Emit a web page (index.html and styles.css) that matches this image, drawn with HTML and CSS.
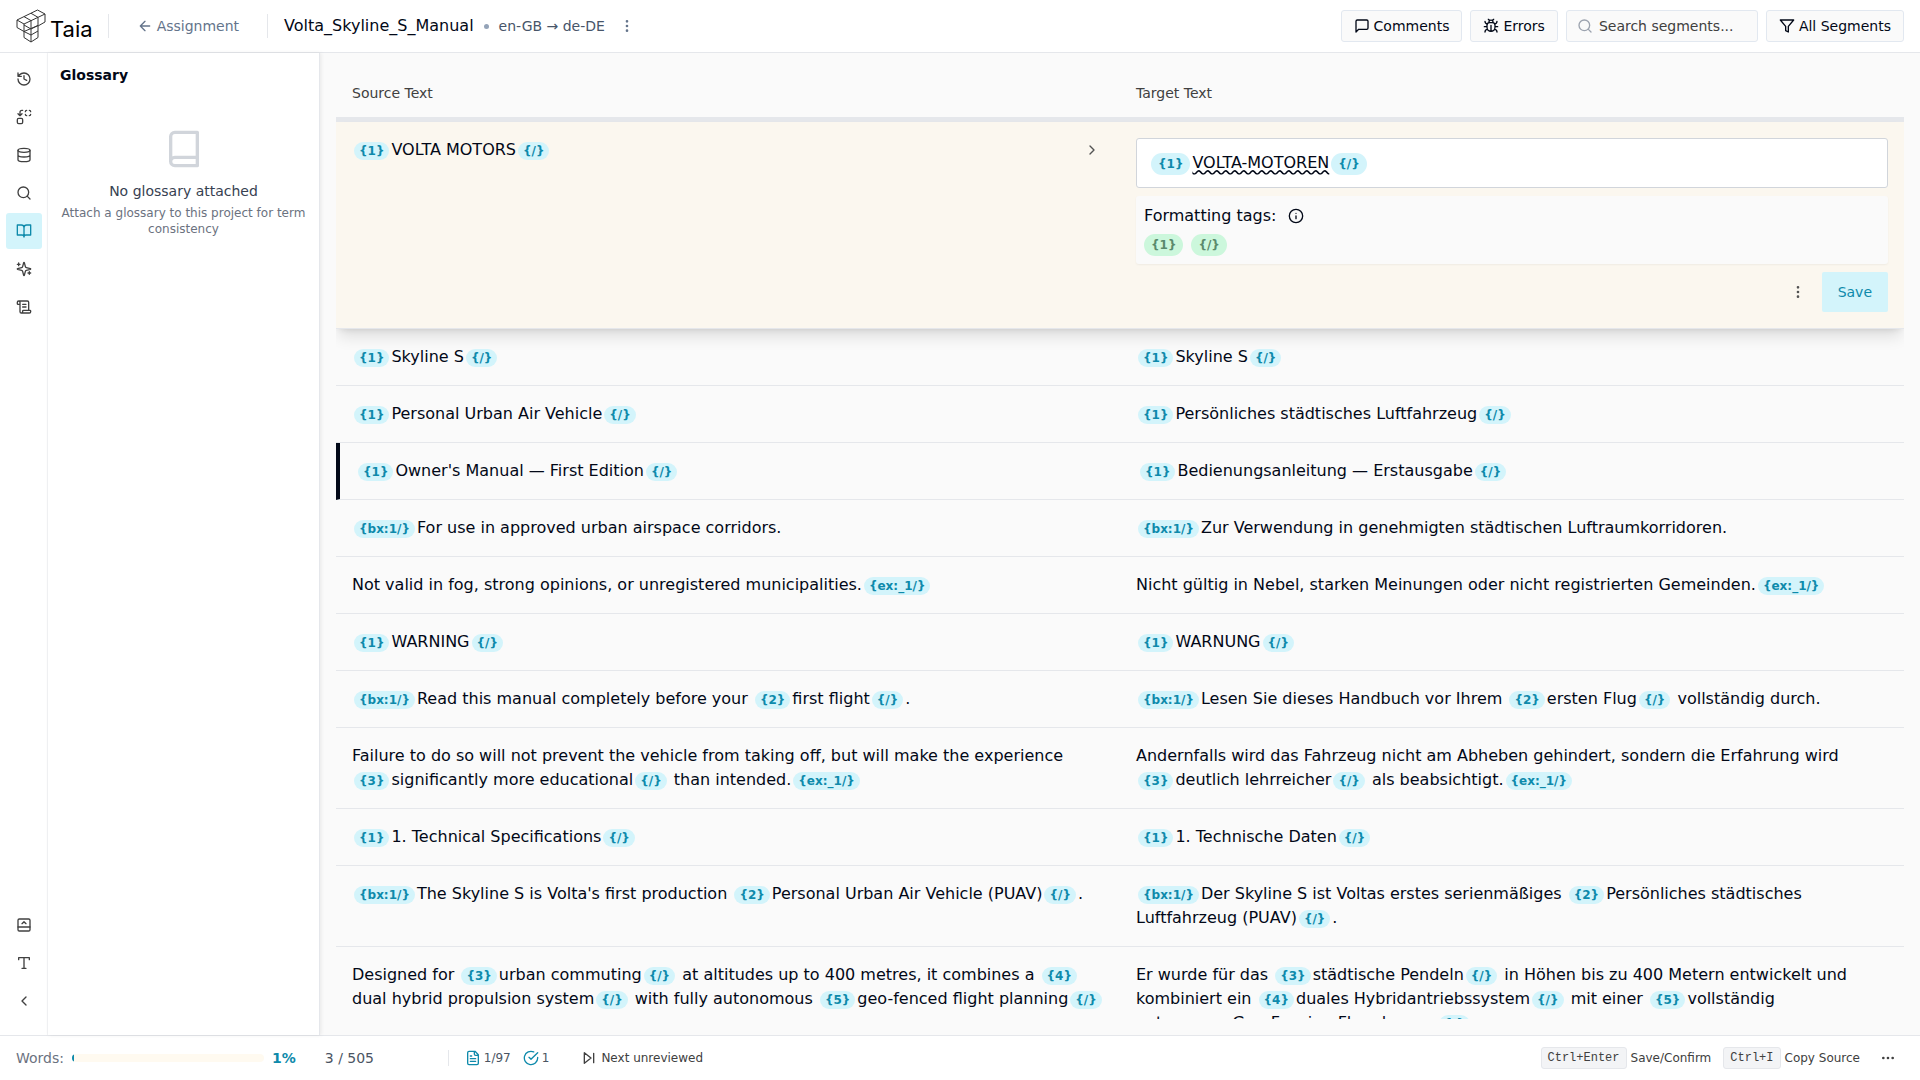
FILE: index.html
```html
<!DOCTYPE html>
<html lang="en">
<head>
    <meta charset="UTF-8">
    <meta name="viewport" content="width=device-width, initial-scale=1.0">
    <title>Volta_Skyline_S_Manual - Taia</title>
    <link rel="stylesheet" href="styles.css">
</head>
<body>
    <header class="topbar">
        <a href="#" class="logo">
            <svg class="logo-mark" viewBox="0 0 30 34" aria-hidden="true">
                <path d="M21.500 1 29 5v8l-7 4v11.500L15 33l-7-4.500V22.500L1 18.500v-7.500z"/>
                <path d="M1 11l7 4 21-10M8 15v7.500l14-6M8 7.600l7 4v7.400M15 4.300l7 4v8.200M22 16.500l-7 3.500-7-4M8 22.500l7 3.500 7-4M15 20v13"/>
            </svg>
            <span class="logo-text">Taia</span>
        </a>
        <span class="divider"></span>
        <a href="#" class="back-link">
            <svg class="icon" viewBox="0 0 24 24"><path d="m12 19-7-7 7-7M19 12H5"/></svg>
            Assignment
        </a>
        <span class="divider"></span>
        <h1 class="project-name">Volta_Skyline_S_Manual</h1>
        <span class="dot"></span>
        <span class="languages">en-GB → de-DE</span>
        <button class="icon-btn project-menu" aria-label="Project menu">
            <svg class="icon" viewBox="0 0 24 24"><circle cx="12" cy="12" r="1"/><circle cx="12" cy="5" r="1"/><circle cx="12" cy="19" r="1"/></svg>
        </button>

        <div class="toolbar">
            <button class="tool-btn">
                <svg class="icon" viewBox="0 0 24 24"><path d="M21 15a2 2 0 0 1-2 2H7l-4 4V5a2 2 0 0 1 2-2h14a2 2 0 0 1 2 2z"/></svg>
                Comments
            </button>
            <button class="tool-btn">
                <svg class="icon" viewBox="0 0 24 24"><path d="m8 2 1.880 1.880M14.120 3.880 16 2M9 7.130v-1a3 3 0 1 1 6 0v1M12 20c-3.300 0-6-2.700-6-6v-3a4 4 0 0 1 4-4h4a4 4 0 0 1 4 4v3c0 3.300-2.700 6-6 6M12 20v-9M6.530 9C4.600 8.800 3 7.100 3 5M6 13H2M3 21c0-2.100 1.700-3.900 3.800-4M20.970 5c0 2.100-1.600 3.800-3.500 4M22 13h-4M17.200 17c2.100.1 3.800 1.900 3.800 4"/></svg>
                Errors
            </button>
            <label class="search">
                <svg class="icon" viewBox="0 0 24 24"><circle cx="11" cy="11" r="8"/><path d="m21 21-4.300-4.300"/></svg>
                <input type="text" placeholder="Search segments..." aria-label="Search segments">
            </label>
            <button class="tool-btn">
                <svg class="icon" viewBox="0 0 24 24"><path d="M22 3H2l8 9.460V19l4 2v-8.540z"/></svg>
                All Segments
            </button>
        </div>
    </header>

    <div class="workspace">
        <nav class="rail">
            <button class="rail-btn" aria-label="History">
                <svg class="icon" viewBox="0 0 24 24"><path d="M3 12a9 9 0 1 0 9-9 9.750 9.750 0 0 0-6.740 2.740L3 8M3 3v5h5M12 7v5l4 2"/></svg>
            </button>
            <button class="rail-btn" aria-label="Find and replace">
                <svg class="icon" viewBox="0 0 24 24"><path d="M14 4c0-1.100.9-2 2-2M20 2c1.100 0 2 .9 2 2M22 8c0 1.100-.9 2-2 2M16 10c-1.100 0-2-.9-2-2M3 7l3 3 3-3M6 10V5c0-1.700 1.300-3 3-3h1"/><rect x="2" y="14" width="8" height="8" rx="2"/></svg>
            </button>
            <button class="rail-btn" aria-label="Translation memory">
                <svg class="icon" viewBox="0 0 24 24"><ellipse cx="12" cy="5" rx="9" ry="3"/><path d="M3 5v14a9 3 0 0 0 18 0V5M3 12a9 3 0 0 0 18 0"/></svg>
            </button>
            <button class="rail-btn" aria-label="Concordance search">
                <svg class="icon" viewBox="0 0 24 24"><circle cx="11" cy="11" r="8"/><path d="m21 21-4.300-4.300"/></svg>
            </button>
            <button class="rail-btn active" aria-label="Glossary">
                <svg class="icon" viewBox="0 0 24 24"><path d="M12 7v14M2 3h6a4 4 0 0 1 4 4v14a3 3 0 0 0-3-3H2zM22 3h-6a4 4 0 0 0-4 4v14a3 3 0 0 1 3-3h7z"/></svg>
            </button>
            <button class="rail-btn" aria-label="AI assistant">
                <svg class="icon" viewBox="0 0 24 24"><path d="M9.937 15.500A2 2 0 0 0 8.500 14.063l-6.135-1.582a.5.5 0 0 1 0-.962L8.500 9.936A2 2 0 0 0 9.937 8.500l1.582-6.135a.5.5 0 0 1 .963 0L14.063 8.500A2 2 0 0 0 15.500 9.937l6.135 1.581a.5.5 0 0 1 0 .964L15.500 14.063a2 2 0 0 0-1.437 1.437l-1.582 6.135a.5.5 0 0 1-.963 0zM20 16v4M22 18h-4M4 3v4M6 5H2"/></svg>
            </button>
            <button class="rail-btn" aria-label="Instructions">
                <svg class="icon" viewBox="0 0 24 24"><path d="M15 12h-5M15 8h-5M19 17V5a2 2 0 0 0-2-2H4M8 21h12a2 2 0 0 0 2-2v-1a1 1 0 0 0-1-1H11a1 1 0 0 0-1 1v1a2 2 0 1 1-4 0V5a2 2 0 1 0-4 0v2a1 1 0 0 0 1 1h3"/></svg>
            </button>
            <span class="rail-space"></span>
            <button class="rail-btn" aria-label="Open bottom panel">
                <svg class="icon" viewBox="0 0 24 24"><rect x="3" y="3" width="18" height="18" rx="2"/><path d="M3 15h18M9 10l3-3 3 3"/></svg>
            </button>
            <button class="rail-btn" aria-label="Text size">
                <svg class="icon" viewBox="0 0 24 24"><path d="M4 7V4h16v3M9 20h6M12 4v16"/></svg>
            </button>
            <button class="rail-btn" aria-label="Collapse">
                <svg class="icon" viewBox="0 0 24 24"><path d="m15 18-6-6 6-6"/></svg>
            </button>
        </nav>

        <aside class="panel">
            <h2 class="panel-title">Glossary</h2>
            <div class="panel-empty">
                <svg class="icon icon-book" viewBox="0 0 24 24"><path d="M4 19.500v-15A2.500 2.500 0 0 1 6.500 2H20v20H6.500a2.500 2.500 0 0 1 0-5H20"/></svg>
                <p class="empty-title">No glossary attached</p>
                <p class="empty-text">Attach a glossary to this project for term consistency</p>
            </div>
        </aside>

        <main class="editor">
            <table class="segments">
                <thead>
                    <tr>
                        <th>Source Text</th>
                        <th>Target Text</th>
                    </tr>
                </thead>
                <tbody>
                    <tr class="current">
                        <td class="current-source">
                            <p><span class="tag">{1}</span>VOLTA MOTORS<span class="tag">{/}</span></p>
                            <button class="icon-btn" aria-label="Copy source to target">
                                <svg class="icon" viewBox="0 0 24 24"><path d="m9 18 6-6-6-6"/></svg>
                            </button>
                        </td>
                        <td class="current-target">
                            <div class="target-input" contenteditable="true" role="textbox" aria-label="Translation" spellcheck="false"><span class="tag">{1}</span><span class="misspelled">VOLTA-MOTOREN</span><span class="tag">{/}</span></div>
                            <div class="format-tags">
                                <div class="format-title">
                                    Formatting tags:
                                    <svg class="icon" viewBox="0 0 24 24"><circle cx="12" cy="12" r="10"/><path d="M12 16v-4M12 8h.01"/></svg>
                                </div>
                                <div class="format-list">
                                    <button class="format-tag">{1}</button>
                                    <button class="format-tag">{/}</button>
                                </div>
                            </div>
                            <div class="current-actions">
                                <button class="icon-btn" aria-label="Segment menu">
                                    <svg class="icon" viewBox="0 0 24 24"><circle cx="12" cy="12" r="1"/><circle cx="12" cy="5" r="1"/><circle cx="12" cy="19" r="1"/></svg>
                                </button>
                                <button class="save-btn">Save</button>
                            </div>
                        </td>
                    </tr>
                    <tr>
                        <td><span class="tag">{1}</span>Skyline S<span class="tag">{/}</span></td>
                        <td class="target"><span class="tag">{1}</span>Skyline S<span class="tag">{/}</span></td>
                    </tr>
                    <tr>
                        <td><span class="tag">{1}</span>Personal Urban Air Vehicle<span class="tag">{/}</span></td>
                        <td class="target"><span class="tag">{1}</span>Persönliches städtisches Luftfahrzeug<span class="tag">{/}</span></td>
                    </tr>
                    <tr class="marked">
                        <td><span class="tag">{1}</span>Owner's Manual — First Edition<span class="tag">{/}</span></td>
                        <td class="target"><span class="tag">{1}</span>Bedienungsanleitung — Erstausgabe<span class="tag">{/}</span></td>
                    </tr>
                    <tr>
                        <td><span class="tag">{bx:1/}</span>For use in approved urban airspace corridors.</td>
                        <td class="target"><span class="tag">{bx:1/}</span>Zur Verwendung in genehmigten städtischen Luftraumkorridoren.</td>
                    </tr>
                    <tr>
                        <td>Not valid in fog, strong opinions, or unregistered municipalities.<span class="tag">{ex:_1/}</span></td>
                        <td class="target">Nicht gültig in Nebel, starken Meinungen oder nicht registrierten Gemeinden.<span class="tag">{ex:_1/}</span></td>
                    </tr>
                    <tr>
                        <td><span class="tag">{1}</span>WARNING<span class="tag">{/}</span></td>
                        <td class="target"><span class="tag">{1}</span>WARNUNG<span class="tag">{/}</span></td>
                    </tr>
                    <tr>
                        <td><span class="tag">{bx:1/}</span>Read this manual completely before your <span class="tag">{2}</span>first flight<span class="tag">{/}</span>.</td>
                        <td class="target"><span class="tag">{bx:1/}</span>Lesen Sie dieses Handbuch vor Ihrem <span class="tag">{2}</span>ersten Flug<span class="tag">{/}</span> vollständig durch.</td>
                    </tr>
                    <tr>
                        <td>Failure to do so will not prevent the vehicle from taking off, but will make the experience <span class="tag">{3}</span>significantly more educational<span class="tag">{/}</span> than intended.<span class="tag">{ex:_1/}</span></td>
                        <td class="target">Andernfalls wird das Fahrzeug nicht am Abheben gehindert, sondern die Erfahrung wird <span class="tag">{3}</span>deutlich lehrreicher<span class="tag">{/}</span> als beabsichtigt.<span class="tag">{ex:_1/}</span></td>
                    </tr>
                    <tr>
                        <td><span class="tag">{1}</span>1. Technical Specifications<span class="tag">{/}</span></td>
                        <td class="target"><span class="tag">{1}</span>1. Technische Daten<span class="tag">{/}</span></td>
                    </tr>
                    <tr>
                        <td><span class="tag">{bx:1/}</span>The Skyline S is Volta's first production <span class="tag">{2}</span>Personal Urban Air Vehicle (PUAV)<span class="tag">{/}</span>.</td>
                        <td class="target"><span class="tag">{bx:1/}</span>Der Skyline S ist Voltas erstes serienmäßiges <span class="tag">{2}</span>Persönliches städtisches Luftfahrzeug (PUAV)<span class="tag">{/}</span>.</td>
                    </tr>
                    <tr>
                        <td>Designed for <span class="tag">{3}</span>urban commuting<span class="tag">{/}</span> at altitudes up to 400 metres, it combines a <span class="tag">{4}</span>dual hybrid propulsion system<span class="tag">{/}</span> with fully autonomous <span class="tag">{5}</span>geo-fenced flight planning<span class="tag">{/}</span></td>
                        <td class="target">Er wurde für das <span class="tag">{3}</span>städtische Pendeln<span class="tag">{/}</span> in Höhen bis zu 400 Metern entwickelt und kombiniert ein <span class="tag">{4}</span>duales Hybridantriebssystem<span class="tag">{/}</span> mit einer <span class="tag">{5}</span>vollständig autonomen Geo-Fencing Flugplanung<span class="tag">{/}</span></td>
                    </tr>
                </tbody>
            </table>
        </main>
    </div>

    <footer class="statusbar">
        <span class="words-label">Words:</span>
        <div class="progress"><div class="progress-fill" style="width: 1%"></div></div>
        <strong class="percent">1%</strong>
        <span class="word-count">3 / 505</span>
        <div class="counts">
            <span class="count">
                <svg class="icon" viewBox="0 0 24 24"><path d="M15 2H6a2 2 0 0 0-2 2v16a2 2 0 0 0 2 2h12a2 2 0 0 0 2-2V7zM14 2v4a2 2 0 0 0 2 2h4M10 9H8M16 13H8M16 17H8"/></svg>
                1/97
            </span>
            <span class="count">
                <svg class="icon" viewBox="0 0 24 24"><path d="M22 11.080V12a10 10 0 1 1-5.930-9.140M22 4 12 14.010l-3-3"/></svg>
                1
            </span>
        </div>
        <button class="next-btn">
            <svg class="icon" viewBox="0 0 24 24"><path d="m5 4 10 8-10 8zM19 5v14"/></svg>
            Next unreviewed
        </button>
        <div class="shortcuts">
            <span class="shortcut"><kbd>Ctrl+Enter</kbd>Save/Confirm</span>
            <span class="shortcut"><kbd>Ctrl+I</kbd>Copy Source</span>
            <button class="icon-btn" aria-label="More shortcuts">
                <svg class="icon" viewBox="0 0 24 24"><circle cx="12" cy="12" r="1"/><circle cx="19" cy="12" r="1"/><circle cx="5" cy="12" r="1"/></svg>
            </button>
        </div>
    </footer>
</body>
</html>
```

FILE: styles.css
```css
* {
    margin: 0;
    padding: 0;
    box-sizing: border-box;
}

body {
    display: flex;
    flex-direction: column;
    height: 100vh;
    overflow: hidden;
    font-family: "DejaVu Sans", sans-serif;
    font-size: 14px;
    line-height: 20px;
    color: #020817;
    background: #ffffff;
}

button,
input {
    font: inherit;
    color: inherit;
    background: none;
    border: none;
}

button {
    cursor: pointer;
}

a {
    color: inherit;
    text-decoration: none;
}

.icon {
    width: 16px;
    height: 16px;
    flex-shrink: 0;
    fill: none;
    stroke: currentColor;
    stroke-width: 2;
    stroke-linecap: round;
    stroke-linejoin: round;
}

.icon-btn {
    display: flex;
    align-items: center;
    justify-content: center;
    width: 24px;
    height: 24px;
}

/* Top bar */
.topbar {
    display: flex;
    align-items: center;
    padding: 10px 16px;
    border-bottom: 1px solid #e5e7eb;
}

.logo {
    display: flex;
    align-items: center;
    gap: 4px;
    height: 32px;
    margin-right: 15px;
}

.logo-mark {
    width: 30px;
    height: 34px;
    fill: none;
    stroke: #333333;
    stroke-width: 1;
    stroke-linejoin: round;
}

.logo-text {
    padding-top: 6px;
    font-family: Inter, sans-serif;
    font-size: 22px;
    font-weight: 400;
    line-height: 28px;
    color: #000000;
}

.divider {
    width: 1px;
    height: 24px;
    background: #e5e7eb;
}

.back-link {
    display: flex;
    align-items: center;
    gap: 4px;
    margin: 0 28px;
    color: #64748b;
}

.project-name {
    margin-left: 16px;
    font-size: 16px;
    font-weight: 400;
    line-height: 24px;
}

.dot {
    width: 5px;
    height: 5px;
    margin: 0 10px;
    border-radius: 50%;
    background: #94a3b8;
}

.languages {
    color: #475569;
}

.project-menu {
    margin-left: 10px;
    color: #64748b;
}

.toolbar {
    display: flex;
    gap: 8px;
    margin-left: auto;
}

.tool-btn,
.search {
    display: flex;
    align-items: center;
    height: 32px;
    padding: 0 12px;
    background: #fafafa;
    border: 1px solid #e2e8f0;
    border-radius: 3px;
}

.tool-btn {
    gap: 4px;
}

.search {
    gap: 6px;
    width: 192px;
    padding: 0 10px;
}

.search .icon {
    color: #9ca3af;
}

.search input {
    flex: 1;
    min-width: 0;
    outline: none;
}

.search input::placeholder {
    color: #404040;
}

/* Workspace */
.workspace {
    display: flex;
    flex: 1;
    min-height: 0;
}

.rail {
    display: flex;
    flex-direction: column;
    gap: 2px;
    width: 48px;
    padding: 8px 5px 16px 6px;
    border-right: 1px solid #f3f4f6;
}

.rail-btn {
    display: flex;
    align-items: center;
    justify-content: center;
    height: 36px;
    border-radius: 3px;
    color: #404040;
}

.rail-btn.active {
    background: #d3f4fb;
    color: #0e8aab;
}

.rail-space {
    flex: 1;
}

.panel {
    position: relative;
    z-index: 1;
    width: 272px;
    padding: 12px;
    border-right: 1px solid #e5e7eb;
    box-shadow: 1px 0 4px rgba(0, 0, 0, 0.08);
}

.panel-title {
    font-size: 14px;
    font-weight: 700;
    line-height: 20px;
}

.panel-empty {
    display: flex;
    flex-direction: column;
    align-items: center;
    padding-top: 44px;
    text-align: center;
}

.icon-book {
    width: 40px;
    height: 40px;
    color: #d1d5db;
}

.empty-title {
    margin: 12px 0 4px;
    color: #374151;
}

.empty-text {
    font-size: 12px;
    line-height: 16px;
    color: #6b7280;
}

.editor {
    flex: 1;
    min-width: 0;
    padding: 16px;
    background: #fafafa;
}

/* Segments */
.segments {
    display: block;
    height: 100%;
    overflow: hidden;
    font-size: 16px;
    line-height: 24px;
}

.segments thead,
.segments tbody {
    display: block;
}

.segments tr {
    display: grid;
    grid-template-columns: 1fr 1fr;
    border-bottom: 1px solid #e5e7eb;
}

.segments thead tr {
    border-bottom-width: 5px;
}

.segments th {
    padding: 14px 16px;
    font-size: 14px;
    font-weight: 400;
    line-height: 20px;
    text-align: left;
    color: #404040;
}

.segments td {
    min-width: 0;
    padding: 16px;
}

.segments .target {
    padding-right: 40px;
}

.segments .marked {
    border-left: 4px solid #020817;
}

.segments .current {
    background: #fbf7ef;
    box-shadow: 0 10px 15px -3px rgba(0, 0, 0, 0.12), 0 4px 6px -4px rgba(0, 0, 0, 0.12);
}

.tag {
    display: inline-block;
    margin: 0 2px;
    padding: 2px 5px;
    border-radius: 9px;
    background: #d3f4fb;
    color: #0e8aab;
    font-size: 12px;
    font-weight: 700;
    line-height: 14px;
}

.current-source {
    display: flex;
    align-items: flex-start;
    justify-content: space-between;
}

.current-source .icon-btn {
    color: #525252;
}

.current-target {
    display: flex;
    flex-direction: column;
    gap: 8px;
}

.target-input {
    padding: 12px;
    background: #ffffff;
    border: 1px solid #d1d5db;
    border-radius: 3px;
}

.target-input .tag {
    padding: 4px 7px;
    border-radius: 11px;
}

.misspelled {
    text-decoration: underline wavy;
    text-decoration-skip-ink: none;
}

.format-tags {
    display: flex;
    flex-direction: column;
    gap: 6px;
    padding: 8px;
    background: #fafafa;
    border-radius: 3px;
    box-shadow: 0 1px 2px rgba(0, 0, 0, 0.05);
}

.format-title {
    display: flex;
    align-items: center;
    gap: 12px;
}

.format-list {
    display: flex;
    gap: 8px;
}

.format-tag {
    padding: 4px 7px;
    border-radius: 11px;
    background: #ccf7dc;
    color: #5a8a6c;
    font-size: 12px;
    font-weight: 700;
    line-height: 14px;
}

.current-actions {
    display: flex;
    align-items: center;
    justify-content: flex-end;
    gap: 12px;
    color: #525252;
}

.save-btn {
    height: 40px;
    padding: 0 16px;
    border-radius: 2px;
    background: #d3f4fb;
    color: #0e8aab;
    font-size: 14px;
}

/* Status bar */
.statusbar {
    display: flex;
    align-items: center;
    height: 45px;
    padding: 0 16px;
    border-top: 1px solid #e5e7eb;
    color: #4b5563;
}

.words-label {
    color: #6b7280;
}

.progress {
    width: 192px;
    height: 8px;
    margin: 0 8px;
    border-radius: 4px;
    background: #fffaf0;
    overflow: hidden;
}

.progress-fill {
    height: 100%;
    border-radius: 4px;
    background: #0e8aab;
}

.percent {
    color: #0e8aab;
}

.word-count {
    width: 123px;
    margin-left: 29px;
}

.counts {
    display: flex;
    align-items: center;
    gap: 12px;
    height: 16px;
    padding-left: 16px;
    border-left: 1px solid #e5e7eb;
    font-size: 12px;
}

.count {
    display: flex;
    align-items: center;
    gap: 3px;
}

.count .icon {
    color: #0e8aab;
}

.next-btn {
    display: flex;
    align-items: center;
    gap: 4px;
    margin-left: 32px;
    font-size: 12px;
    color: #404040;
}

.shortcuts {
    display: flex;
    align-items: center;
    gap: 12px;
    margin-left: auto;
    font-size: 12px;
    color: #404040;
}

.shortcut {
    display: flex;
    align-items: center;
    gap: 4px;
}

kbd {
    padding: 2px 6px;
    border: 1px solid #e5e7eb;
    border-radius: 3px;
    background: #f3f4f6;
    font-family: "Liberation Mono", monospace;
    font-size: 12px;
    line-height: 16px;
}

.shortcuts .icon-btn {
    width: 32px;
}
```
